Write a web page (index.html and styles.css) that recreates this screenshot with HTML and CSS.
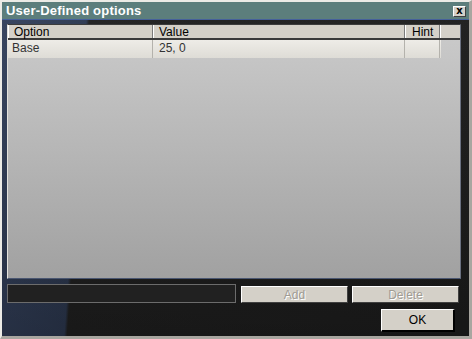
FILE: index.html
```html
<!DOCTYPE html>
<html lang="en">
<head>
    <meta charset="UTF-8">
    <title>User-Defined options</title>
    <link rel="stylesheet" href="styles.css">
</head>
<body>
    <div class="window">
        <div class="titlebar">
            <span class="title">User-Defined options</span>
            <span class="close">x</span>
        </div>
        <div class="body">
            <div class="list">
                <div class="head">
                    <div class="col c-opt">Option</div>
                    <div class="col c-val">Value</div>
                    <div class="col c-hint">Hint</div>
                    <div class="col c-pad"></div>
                </div>
                <div class="row">
                    <div class="cell c-opt">Base</div>
                    <div class="cell c-val">25, 0</div>
                    <div class="cell c-hint"></div>
                </div>
            </div>
            <div class="edit-row">
                <div class="field"></div>
                <button class="btn btn-add" disabled>Add</button>
                <button class="btn btn-del" disabled>Delete</button>
            </div>
            <div class="ok-row">
                <button class="btn btn-ok">OK</button>
            </div>
        </div>
    </div>
</body>
</html>
```

FILE: styles.css
```css
* {
    box-sizing: border-box;
}
body {
    margin: 0;
    font-family: "Liberation Sans", Arial, sans-serif;
    font-size: 12px;
    background: #d4d0c8;
}
.window {
    width: 472px;
    height: 339px;
    display: flex;
    flex-direction: column;
    border-style: solid;
    border-width: 2px 3px 3px 2px;
    border-color: #ecebe6 #a8a6a0 #a8a6a0 #ecebe6;
    background: #d4d0c8;
}
.titlebar {
    height: 18px;
    background: #5c7e7c;
    border-bottom: 1px solid #45609a;
    display: flex;
    align-items: center;
    justify-content: space-between;
    padding: 0 3px 0 4px;
}
.title {
    color: #fff;
    font-weight: bold;
    font-size: 13px;
    letter-spacing: 0.2px;
}
.close {
    width: 13px;
    height: 11px;
    margin-top: 1px;
    background: #d4d0c8;
    border: 1px solid;
    border-color: #fff #404040 #404040 #fff;
    font-family: "DejaVu Sans", sans-serif;
    font-weight: bold;
    font-size: 10px;
    line-height: 8px;
    text-align: center;
    color: #000;
}
.body {
    flex: 1;
    display: flex;
    flex-direction: column;
    padding: 4px 8px 4px 5px;
    background:
        linear-gradient(to bottom, rgba(255, 255, 255, 0.02), rgba(0, 0, 0, 0.25)),
        linear-gradient(94deg, #35425d 0, #2e3a52 84px, #212121 87px, #1e1e1e 100%);
}
.list {
    flex: 1;
    border: 1px solid;
    border-color: #3c3c3c #6a7080 #4a5670 #e4e2dc;
    background: linear-gradient(to bottom, #cbcbcb, #a1a1a1);
}
.head {
    display: flex;
    height: 15px;
    border-bottom: 2px solid #3a3a3a;
    background: #d4d0c8;
}
.col {
    height: 13px;
    line-height: 14px;
    padding-left: 5px;
    color: #000;
    border-right: 1px solid #7a7a7a;
    border-left: 1px solid #fff;
}
.c-opt {
    width: 145px;
}
.c-val {
    width: 252px;
}
.c-hint {
    width: 35px;
    padding-left: 6px;
}
.c-pad {
    width: 20px;
    border-right: none;
}
.row {
    display: flex;
    height: 18px;
    background: linear-gradient(to bottom, #eeece7, #dedcd6);
    width: 433px;
}
.cell {
    line-height: 17px;
    padding-left: 4px;
    color: #333;
    border-right: 1px solid #b4b2ac;
}
.cell.c-val {
    padding-left: 6px;
}
.edit-row {
    display: flex;
    align-items: flex-end;
    margin-top: 5px;
    height: 19px;
}
.field {
    width: 229px;
    height: 19px;
    border: 1px solid #6c6c6c;
    background: #212121;
}
.btn {
    font-family: "Liberation Sans", Arial, sans-serif;
    font-size: 12px;
    background: #d4d0c8;
    border: 1px solid;
    border-color: #fff #404040 #404040 #fff;
    padding: 0;
}
.btn-add,
.btn-del {
    width: 107px;
    height: 17px;
    color: #a09c94;
    text-shadow: 1px 1px 0 #fff;
}
.btn-add {
    margin-left: 5px;
}
.btn-del {
    margin-left: 4px;
}
.ok-row {
    display: flex;
    justify-content: flex-end;
    margin-top: 6px;
    padding-right: 6px;
}
.btn-ok {
    width: 74px;
    height: 23px;
    color: #000;
    border-width: 1px 2px 2px 1px;
    border-color: #fff #000 #000 #fff;
}
```
